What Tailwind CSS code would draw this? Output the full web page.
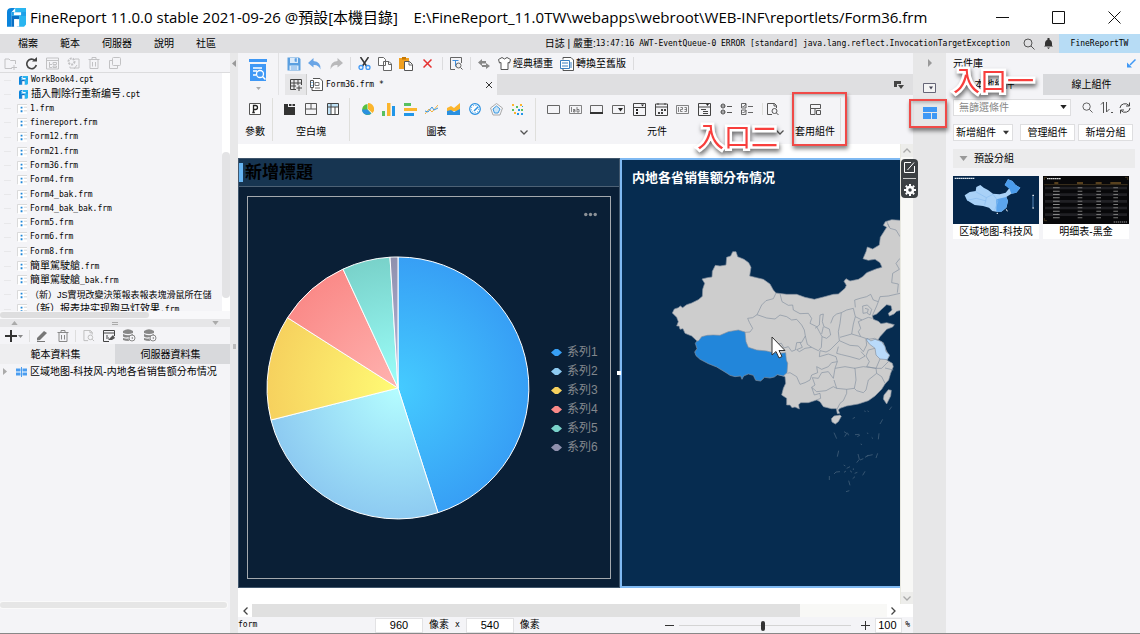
<!DOCTYPE html>
<html lang="zh-Hant">
<head>
<meta charset="utf-8">
<meta name="viewport" content="width=device-width, initial-scale=1">
<title>FineReport 11.0.0</title>
<script src="https://cdn.jsdelivr.net/npm/@tailwindcss/browser@4"></script>
</head>
<body class="relative flex h-screen flex-col overflow-hidden bg-[#f4f4f7] font-['Liberation_Sans','Noto_Sans_CJK_TC',sans-serif] text-[10px] leading-[14px] text-black">

<svg class="hidden" aria-hidden="true">
  <symbol id="logo" viewBox="0 0 58 58"><path d="M14 0H58V50L52 57H37V24H25V0Z" fill="#29b5f0"/><path d="M0 12Q0 0 14 0H25L14 12V57H0Z" fill="#0a84dc"/><path d="M14 24H37V57H30V34H22V57H14Z" fill="#0a6fc4"/><path d="M14 12H58V24H14Z" fill="#1ea0e8"/><path d="M22 34H37V57H22Z" fill="#fff"/><path d="M21 13H43V22H21Z" fill="#fff"/></symbol>
  <symbol id="frm" viewBox="0 0 11 11"><path d="M1 1h10v10H1z" fill="#fff"/><path d="M.5 10V.5H11" fill="none" stroke="#d6d6d6"/><path d="M4 3h2v2H4zM4 7h2v2H4z" fill="#2087d8"/><path d="M7.500 3.500H11M7.500 7.500H11" stroke="#cfcfcf"/></symbol>
  <symbol id="search" viewBox="0 0 12 12"><circle cx="5" cy="5" r="4" fill="none" stroke="#555"/><path d="M8 8l3.500 3.500" stroke="#555"/></symbol>
  <symbol id="down" viewBox="0 0 8 5"><path d="M0 0h8L4 5z" fill="currentColor"/></symbol>
  <symbol id="chev" viewBox="0 0 8 5"><path d="M.5 .5L4 4 7.500 .5" fill="none" stroke="currentColor" stroke-width="1.300"/></symbol>
  <symbol id="trash" viewBox="0 0 12 12"><path d="M.5 2.500h11M4 2V.5h4V2M2 3v8.500h8V3M4.500 5v4.500M7.500 5v4.500" fill="none" stroke="currentColor"/></symbol>
  <symbol id="db" viewBox="0 0 13 13"><path d="M0 2Q5 -1.500 10 2V4Q5 6 0 4ZM0 5Q5 7.500 10 5V6L6 8Q2 9 0 7.500ZM0 9Q3 10 5.500 9.500L6 12Q2 12 0 11Z" fill="#888"/><circle cx="9" cy="9" r="3" fill="#f4f4f7" stroke="#888"/><path d="M8 9l2-1v2z" fill="#888"/></symbol>
  <symbol id="filedoc" viewBox="0 0 12 13"><path d="M5 11.500H.5V.5h7l2 2V5M7 .5V3h2.500" fill="none" stroke="currentColor"/><circle cx="7.500" cy="8" r="2.500" fill="none" stroke="currentColor"/><path d="M9.500 10l2 2" stroke="currentColor"/></symbol>
</svg>

<!-- Title bar -->
<header class="flex h-[34px] shrink-0 items-center bg-white">
  <svg class="ml-[7px] size-[19px]" aria-hidden="true"><use href="#logo"/></svg>
  <h1 class="ml-1 flex-1 whitespace-pre font-['Open_Sans','Noto_Sans_CJK_TC',sans-serif] text-[15px] leading-[20px]">FineReport 11.0.0 stable 2021-09-26 @預設[本機目錄]    E:\FineReport_11.0TW\webapps\webroot\WEB-INF\reportlets/Form36.frm</h1>
  <div class="flex gap-[43px] pr-[19px]">
    <button aria-label="最小化"><svg class="size-[13px]" viewBox="0 0 13 13"><path d="M0 6.500h13" stroke="#111"/></svg></button>
    <button aria-label="最大化"><svg class="size-[13px]" viewBox="0 0 13 13"><path d="M.5 .5h12v12H.5z" fill="none" stroke="#111"/></svg></button>
    <button aria-label="關閉"><svg class="size-[13px]" viewBox="0 0 13 13"><path d="M.5 .5l12 12M12.500 .5l-12 12" stroke="#111"/></svg></button>
  </div>
</header>

<!-- Menu bar -->
<div class="flex h-[19px] shrink-0 items-center bg-[#dfdfe1]">
  <nav class="flex flex-1 gap-[22px] pl-[18px]">
    <button>檔案</button><button>範本</button><button>伺服器</button><button>說明</button><button>社區</button>
  </nav>
  <p class="flex items-center whitespace-pre"><span>日誌 | 嚴重:</span><span class="font-['DejaVu_Sans_Mono',monospace] text-[8px]">13:47:16 AWT-EventQueue-0 ERROR [standard] java.lang.reflect.InvocationTargetException</span></p>
  <button class="ml-[13px]" aria-label="搜尋"><svg class="size-3"><use href="#search"/></svg></button>
  <button class="ml-2 mr-[5px]" aria-label="通知"><svg class="size-[11px]" viewBox="0 0 11 11"><path d="M4.500 0h2v1.500Q9 2.500 9 5v2.500l1 1H1l1-1V5q0-2.500 2.500-3.500zM4 9.500h3L5.500 11z" fill="#333"/></svg></button>
  <button class="h-full w-[81px] bg-[#b7dcf5] font-['DejaVu_Sans_Mono',monospace] text-[8px]">FineReportTW</button>
</div>

<main class="flex min-h-0 flex-1 border-b border-[#888]">

  <!-- Left column -->
  <aside class="flex w-[230px] shrink-0 flex-col">
    <div class="flex h-5 shrink-0 items-center gap-2 border-b border-[#dcdcde] pl-1 pt-px text-[#c2c2c4]">
      <button aria-label="新增資料夾"><svg class="size-[13px]" viewBox="0 0 13 13"><path d="M8 11.500H1V2h4l1.500 1.500h5V7M10 8v5M7.500 10.500H13" fill="none" stroke="currentColor"/></svg></button>
      <button aria-label="重新整理"><svg class="size-[13px]" viewBox="0 0 13 13"><path d="M10 3.500A4.800 4.800 0 1 0 11.300 8" fill="none" stroke="#444" stroke-width="1.600"/><path d="M7 4.500h5V0z" fill="#444"/></svg></button>
      <button aria-label="定位"><svg class="size-[13px]" viewBox="0 0 13 13"><path d="M.5 1h12v11H.5zM.5 3.500h12M3.500 5v5.500H6M3.500 7.500H6M7 5.500h3.500v2H7zM7 9h3.500v1.500H7z" fill="none" stroke="currentColor"/></svg></button>
      <button aria-label="設定"><svg class="size-[13px]" viewBox="0 0 13 13"><circle cx="4.500" cy="4.500" r="3" fill="none" stroke="currentColor" stroke-width="2" stroke-dasharray="2 1"/><path d="M8 2h4v9H3V9.500M7 12l3-4" fill="none" stroke="currentColor"/></svg></button>
      <button aria-label="刪除"><svg class="size-3"><use href="#trash"/></svg></button>
      <button class="pl-px" aria-label="複製"><svg class="size-3" viewBox="0 0 12 12"><rect x="3.500" y=".5" width="8" height="8" rx="1" fill="none" stroke="currentColor"/><path d="M3 3.500H.5v8h8V9" fill="none" stroke="currentColor"/></svg></button>
    </div>

    <div class="relative flex h-[238px] shrink-0 overflow-hidden">
      <ul class="flex h-[243px] flex-1 flex-col justify-between overflow-hidden pl-[4px] whitespace-nowrap *:flex *:h-[14px] *:items-center *:gap-[3px]">
        <li><i class="mr-[5px] w-[7px] border-t border-[#e8e8ea]"></i><svg class="size-[9px]"><use href="#logo"/></svg><span class="font-['DejaVu_Sans_Mono',monospace] text-[8px]">WorkBook4.cpt</span></li>
        <li><i class="mr-[5px] w-[7px] border-t border-[#e8e8ea]"></i><svg class="size-[9px]"><use href="#logo"/></svg><span>插入刪除行重新编号<span class="font-['DejaVu_Sans_Mono',monospace] text-[8px]">.cpt</span></span></li>
        <li><i class="mr-[3px] w-[7px] border-t border-[#e8e8ea]"></i><svg class="size-[10px]"><use href="#frm"/></svg><span class="font-['DejaVu_Sans_Mono',monospace] text-[8px]">1.frm</span></li>
        <li><i class="mr-[3px] w-[7px] border-t border-[#e8e8ea]"></i><svg class="size-[10px]"><use href="#frm"/></svg><span class="font-['DejaVu_Sans_Mono',monospace] text-[8px]">finereport.frm</span></li>
        <li><i class="mr-[3px] w-[7px] border-t border-[#e8e8ea]"></i><svg class="size-[10px]"><use href="#frm"/></svg><span class="font-['DejaVu_Sans_Mono',monospace] text-[8px]">Form12.frm</span></li>
        <li><i class="mr-[3px] w-[7px] border-t border-[#e8e8ea]"></i><svg class="size-[10px]"><use href="#frm"/></svg><span class="font-['DejaVu_Sans_Mono',monospace] text-[8px]">Form21.frm</span></li>
        <li><i class="mr-[3px] w-[7px] border-t border-[#e8e8ea]"></i><svg class="size-[10px]"><use href="#frm"/></svg><span class="font-['DejaVu_Sans_Mono',monospace] text-[8px]">Form36.frm</span></li>
        <li><i class="mr-[3px] w-[7px] border-t border-[#e8e8ea]"></i><svg class="size-[10px]"><use href="#frm"/></svg><span class="font-['DejaVu_Sans_Mono',monospace] text-[8px]">Form4.frm</span></li>
        <li><i class="mr-[3px] w-[7px] border-t border-[#e8e8ea]"></i><svg class="size-[10px]"><use href="#frm"/></svg><span class="font-['DejaVu_Sans_Mono',monospace] text-[8px]">Form4_bak.frm</span></li>
        <li><i class="mr-[3px] w-[7px] border-t border-[#e8e8ea]"></i><svg class="size-[10px]"><use href="#frm"/></svg><span class="font-['DejaVu_Sans_Mono',monospace] text-[8px]">Form4_bak_bak.frm</span></li>
        <li><i class="mr-[3px] w-[7px] border-t border-[#e8e8ea]"></i><svg class="size-[10px]"><use href="#frm"/></svg><span class="font-['DejaVu_Sans_Mono',monospace] text-[8px]">Form5.frm</span></li>
        <li><i class="mr-[3px] w-[7px] border-t border-[#e8e8ea]"></i><svg class="size-[10px]"><use href="#frm"/></svg><span class="font-['DejaVu_Sans_Mono',monospace] text-[8px]">Form6.frm</span></li>
        <li><i class="mr-[3px] w-[7px] border-t border-[#e8e8ea]"></i><svg class="size-[10px]"><use href="#frm"/></svg><span class="font-['DejaVu_Sans_Mono',monospace] text-[8px]">Form8.frm</span></li>
        <li><i class="mr-[3px] w-[7px] border-t border-[#e8e8ea]"></i><svg class="size-[10px]"><use href="#frm"/></svg><span>簡單駕駛艙<span class="font-['DejaVu_Sans_Mono',monospace] text-[8px]">.frm</span></span></li>
        <li><i class="mr-[3px] w-[7px] border-t border-[#e8e8ea]"></i><svg class="size-[10px]"><use href="#frm"/></svg><span>簡單駕駛艙<span class="font-['DejaVu_Sans_Mono',monospace] text-[8px]">_bak.frm</span></span></li>
        <li><i class="mr-[3px] w-[7px] shrink-0 border-t border-[#e8e8ea]"></i><svg class="size-[10px] shrink-0"><use href="#frm"/></svg><span class="text-[9px]">（新）JS實現改變決策報表報表塊滑鼠所在儲</span></li>
        <li><i class="mr-[3px] w-[7px] border-t border-[#e8e8ea]"></i><svg class="size-[10px]"><use href="#frm"/></svg><span>（新）报表块实现跑马灯效果<span class="font-['DejaVu_Sans_Mono',monospace] text-[8px]">.frm</span></span></li>
      </ul>
      <div class="flex w-[8px] shrink-0 flex-col bg-white pt-[79px]"><div class="h-[146px] rounded-full bg-[#e3e3e5]"></div></div>
    </div>
    <div class="h-[8px] shrink-0 bg-[#f8f8fa] pt-px"><div class="h-[6px] w-[149px] rounded-full bg-[#dededf]"></div></div>
    <div class="flex h-[8px] shrink-0 items-center justify-between bg-[#e6e6e8] px-[11px] text-[#aaa]">
      <svg class="h-1 w-[7px] rotate-180"><use href="#down"/></svg>
      <span class="h-[3px] w-[6px] border-y border-[#aaa]"></span>
      <svg class="h-1 w-[7px]"><use href="#down"/></svg>
    </div>
    <div class="flex h-[17px] shrink-0 items-center pl-[5px] text-[#888]">
      <button class="flex items-center" aria-label="新增資料集"><svg class="h-3 w-[18px]" viewBox="0 0 18 12"><path d="M0 6h12M6 0v12" stroke="#333" stroke-width="2"/><path d="M13 5h5l-2.500 3z" fill="#888"/></svg></button>
      <span class="mx-[6px] h-3 border-l border-[#ddd]"></span>
      <button aria-label="編輯"><svg class="size-3" viewBox="0 0 12 12"><path d="M1 8L8 1l3 2-7 7-3 .5z" fill="#777"/><path d="M1 11.500h8" stroke="#777"/></svg></button>
      <button class="ml-[9px]" aria-label="刪除"><svg class="size-3"><use href="#trash"/></svg></button>
      <span class="mx-[6px] h-3 border-l border-[#ddd]"></span>
      <button class="ml-px text-[#bbb]" aria-label="預覽"><svg class="size-3"><use href="#filedoc"/></svg></button>
      <button class="ml-2" aria-label="連線"><svg class="h-3 w-[13px]" viewBox="0 0 13 12"><path d="M6 11.500H.5V.5h11V6M.5 3h11M3 8h3M3 6h2" fill="none" stroke="#444"/><path d="M5 10l5-5 2 3-3 2z" fill="#555"/></svg></button>
      <button class="ml-[7px]" aria-label="資料庫"><svg class="size-[13px]"><use href="#db"/></svg></button>
      <button class="ml-2" aria-label="資料庫權限"><svg class="size-[13px]"><use href="#db"/></svg></button>
    </div>
    <div class="grid h-5 shrink-0 grid-cols-2">
      <button class="bg-[#eeeef0] pr-1 pt-[2px]">範本資料集</button><button class="bg-[#d8d9dc] pr-1 pt-[2px]">伺服器資料集</button>
    </div>
    <div class="flex h-[15px] items-center whitespace-nowrap pl-[3px]">
      <svg class="h-[7px] w-1" viewBox="0 0 4 7"><path d="M0 0l4 3.500L0 7z" fill="#aaa"/></svg>
      <svg class="ml-[9px] mr-[3px] h-[10px] w-[11px]" viewBox="0 0 11 10"><path d="M0 1.500h4.500v7H0zM6.500 1.500H11v7H6.500z" fill="#4a9df0"/><path d="M0 5h11" stroke="#fff"/><path d="M5.500 0v10" stroke="#4a9df0"/></svg>
      <span class="font-['Liberation_Sans','Noto_Sans_CJK_SC',sans-serif]">区域地图-科技风-内地各省销售额分布情况</span>
    </div>
    <div class="mt-auto mb-[25px] h-[6px] w-[227px] rounded-full bg-[#e6e6e6] ring-1 ring-[#fafafa]"></div>
  </aside>

  <div class="flex w-2 shrink-0 flex-col items-center bg-[#e8e8e9] pt-[7px]">
    <svg class="h-[7px] w-1" viewBox="0 0 4 7"><path d="M4 0v7L0 3.500z" fill="#999"/></svg>
    <span class="mt-[277px] h-[5px] w-[3px] bg-[#bbb]"></span>
  </div>

  <!-- Designer -->
  <section class="flex min-w-0 flex-1 flex-col">
    <div class="flex h-[42px] shrink-0">
      <button class="flex w-10 flex-col items-center pt-1" aria-label="預覽">
        <svg class="h-[26px] w-[18px]" viewBox="0 0 18 26"><path d="M0 2h18v3H0zM1 7h16v17H1z" fill="#3f98f5"/><path d="M4 11h9M4 14h4M4 18h3" stroke="#fff" stroke-width="1.500"/><circle cx="11" cy="17" r="3.500" fill="#3f98f5" stroke="#fff" stroke-width="1.300"/><path d="M13.500 19.500l3 3" stroke="#fff" stroke-width="1.500"/></svg>
        <svg class="mt-1 h-[3px] w-[5px] text-[#aaa]"><use href="#down"/></svg>
      </button>
      <div class="flex min-w-0 flex-1 flex-col border-l border-[#e2e2e4] pl-[6px]">
        <div class="flex h-[21px] shrink-0 items-center gap-[7px] whitespace-nowrap pl-[2px]">
          <button aria-label="儲存"><svg class="size-[14px]" viewBox="0 0 14 14"><path d="M.5 .5h11.500l1.500 1.500v11.500H.5z" fill="#5b9fe0"/><path d="M3 1h8v5H3zM2.500 8.500h9V13h-9z" fill="#dcebfa"/><path d="M8 1.500h1.500v3H8zM4 10h6M4 12h6" fill="#3f8edc" stroke="#7ab0e8"/></svg></button>
          <button aria-label="復原"><svg class="size-[14px]" viewBox="0 0 14 14"><path d="M5.500 1L0 6l5.500 4.500V8q5-.5 7 4.500Q13 4.500 5.500 4z" fill="#6aa5e6"/></svg></button>
          <button aria-label="重做"><svg class="size-[14px]" viewBox="0 0 14 14"><path d="M8.500 1L14 6l-5.500 4.500V8q-5-.5-7 4.500Q1 4.500 8.500 4z" fill="#b9b9bb"/></svg></button>
          <span class="h-[13px] border-l border-[#dcdcde]"></span>
          <button aria-label="剪下"><svg class="size-[13px]" viewBox="0 0 13 13"><path d="M2.500 0l6 9M10.500 0l-6 9" stroke="#333" stroke-width="1.500"/><circle cx="3" cy="10.500" r="2" fill="none" stroke="#3f98f5" stroke-width="1.300"/><circle cx="10" cy="10.500" r="2" fill="none" stroke="#3f98f5" stroke-width="1.300"/></svg></button>
          <button aria-label="複製"><svg class="size-[14px]" viewBox="0 0 14 14"><path d="M.5 .5h5l2 2v6h-7zM5.500 4.500h5.500l2.500 2.500v6.500h-8z" fill="#fff" stroke="#666"/><path d="M10.500 5v2.500h3" fill="none" stroke="#666"/></svg></button>
          <button aria-label="貼上"><svg class="size-[14px]" viewBox="0 0 14 14"><path d="M0 1h10v11H0z" fill="#f0a020"/><path d="M3 0h4v2.500H3z" fill="#c87800"/><path d="M5.500 4.500h5l3 3v6h-8z" fill="#fff" stroke="#555"/><path d="M10 5v3h3" fill="none" stroke="#666"/></svg></button>
          <button class="px-[3px]" aria-label="刪除"><svg class="size-[9px]" viewBox="0 0 9 9"><path d="M.5 .5l8 8M8.500 .5l-8 8" stroke="#e53030" stroke-width="1.500"/></svg></button>
          <span class="h-[13px] border-l border-[#dcdcde]"></span>
          <button aria-label="範本預覽"><svg class="size-[13px]" viewBox="0 0 13 13"><path d="M5 12.500H.5V.5h11V6" fill="none" stroke="#666"/><path d="M2.500 3.500h6M5.500 3.500v6" stroke="#3f8edc"/><circle cx="8.500" cy="8.500" r="2.500" fill="#eee" stroke="#666"/><path d="M10.500 10.500l2 2" stroke="#555"/></svg></button>
          <span class="h-[13px] border-l border-[#dcdcde]"></span>
          <button aria-label="取代"><svg class="h-[10px] w-[12px]" viewBox="0 0 12 10"><path d="M4 0v2h4v2.500H4V7L0 3.500zM8 4l4 3-4 3V8H4V6h4z" fill="#888"/></svg></button>
          <button class="flex items-center gap-[2px] pl-px"><svg class="size-[13px]" viewBox="0 0 13 13"><path d="M4 .5q2.500 3 5 0l3.500 2-1 3.500L10 5.500v7H3v-7L1.500 6l-1-3.500z" fill="#fff" stroke="#555"/></svg>經典穩重</button>
          <button class="flex items-center gap-[2px]"><svg class="size-[14px]" viewBox="0 0 14 14"><path d="M3 2.500v-2h8l2.500 2.500v10.500H3V12" fill="#fff" stroke="#555"/><path d="M.5 3.500h9v8h-9z" fill="#fff" stroke="#3a7fc0"/><path d="M2 6h6M2 9h6M11 5v6" stroke="#3a7fc0"/></svg>轉換至舊版</button>
          <span class="h-[13px] border-l border-[#dcdcde]"></span>
        </div>
        <div class="flex h-[21px] items-center bg-[#dfdfe1]">
          <button class="grid h-full w-[22px] place-items-center border-r border-[#ccc] bg-[#e6e6e8]" aria-label="新增範本"><svg class="size-[12px]" viewBox="0 0 12 12"><path d="M.5 6V.5h11V6M.5 4h11M4 .5v10M8 .5V6M.5 7H6M.5 4v6.500H6M9 6.500V12M6.500 9H12" fill="none" stroke="#444"/></svg></button>
          <div class="flex h-full w-[190px] items-center bg-[#f4f4f7] pl-[3px] pr-[5px]">
            <svg class="size-[13px]" viewBox="0 0 13 13"><path d="M3 .5h7l2.500 2.500v9.500H2V10" fill="#fff" stroke="#555"/><path d="M.5 2.500h3v7h-3z" fill="#fff" stroke="#555"/><path d="M1.500 4.500h1M1.500 7.500h1" stroke="#2087d8"/><path d="M5 4.500h4v3H5zM5 10h5" fill="none" stroke="#777"/></svg>
            <span class="ml-[3px] flex-1 whitespace-pre font-['DejaVu_Sans_Mono',monospace] text-[8px]">Form36.frm *</span>
            <button aria-label="關閉分頁"><svg class="size-[6px]" viewBox="0 0 6 6"><path d="M0 0l6 6M6 0L0 6" stroke="#333"/></svg></button>
          </div>
          <button class="ml-auto mr-[9px]" aria-label="範本清單"><svg class="h-[8px] w-[10px]" viewBox="0 0 10 8"><path d="M0 0h7v3H3v3H0zM4 4h6L7 8z" fill="#444"/></svg></button>
        </div>
      </div>
    </div>

    <!-- Component ribbon -->
    <div class="flex h-[49px] shrink-0 *:my-[3px] *:flex *:flex-col *:items-center *:gap-[9px] *:pt-1">
      <div class="w-[35px] border-r border-[#dfdfdc]">
        <div class="flex h-[14px] items-center"><button aria-label="參數"><svg class="size-3" viewBox="0 0 12 12"><path d="M.5 .5h11v11H.5z" fill="#fff" stroke="#555"/><path d="M4.500 9.500v-7h2q2 0 2 2t-2 2h-2M3.300 9.500h2.500" fill="none" stroke="#222" stroke-width="1.300"/></svg></button></div>
        <span>參數</span>
      </div>
      <div class="w-[77px] border-r border-[#dfdfdc]">
        <div class="flex h-[14px] items-center gap-[10px]">
          <button aria-label="tab塊"><svg class="size-[11px]" viewBox="0 0 11 11"><path d="M0 0h4v3h7v8H0z" fill="#333"/><path d="M5 0h2.500v2H5zM8.500 0H11v2H8.500z" fill="#333"/></svg></button>
          <button aria-label="絕對畫布塊"><svg class="size-3" viewBox="0 0 12 12"><path d="M.5 .5h11v11H.5zM.5 6h11M6 .5V6" fill="none" stroke="#555"/></svg></button>
          <button aria-label="報表塊"><svg class="size-3" viewBox="0 0 12 12"><path d="M.5 .5h11v11H.5z" fill="#fff" stroke="#444"/><path d="M1 1h3v10H1zM4 1h7v3H4z" fill="#bfe2f7"/><path d="M4 .5v11M.5 4h11M8 4v7" stroke="#444"/></svg></button>
        </div>
        <span>空白塊</span>
      </div>
      <div class="w-[186px] border-r border-[#dfdfdc]">
        <div class="grid h-[14px] w-[172px] grid-cols-8 place-items-center">
          <button aria-label="圓形圖"><svg class="size-[13px]" viewBox="0 0 13 13"><path d="M6.500 6.500V1a5.500 5.500 0 1 0 4 9.500z" fill="#58c040"/><path d="M6.500 6.500h-5.500a5.500 5.500 0 0 0 9 4z" fill="#2a90e0"/><path d="M7 6V0a6 6 0 0 1 4.500 10z" fill="#fbb52d"/></svg></button>
          <button aria-label="直條圖"><svg class="size-[13px]" viewBox="0 0 13 13"><path d="M0 8h3v5H0z" fill="#58c060"/><path d="M5 0h3.500v13H5z" fill="#fbb52d"/><path d="M10 3h3v10h-3z" fill="#2196e8"/></svg></button>
          <button aria-label="橫條圖"><svg class="size-[13px]" viewBox="0 0 13 13"><path d="M0 0h7v3H0z" fill="#58c060"/><path d="M0 5h13v3H0z" fill="#fbb52d"/><path d="M0 10h10v3H0z" fill="#2196e8"/></svg></button>
          <button aria-label="折線圖"><svg class="size-[13px]" viewBox="0 0 13 13"><path d="M0 11l4-5 3 3 6-7" fill="none" stroke="#f0b040"/><path d="M0 8l3 1 4-5 2 3 4-2" fill="none" stroke="#3a98e0"/></svg></button>
          <button aria-label="區域圖"><svg class="size-[13px]" viewBox="0 0 13 13"><path d="M0 5l4-2 3 2 6-5v8H0z" fill="#fbb52d"/><path d="M0 8l4-1 3 2 6-3v6H0z" fill="#2a90e0"/></svg></button>
          <button aria-label="儀表板"><svg class="size-[12px]" viewBox="0 0 12 12"><circle cx="6" cy="6" r="5.300" fill="#fff" stroke="#2a90e0" stroke-width="1.200"/><circle cx="6" cy="6" r="3.700" fill="none" stroke="#2a90e0" stroke-dasharray="1 1.500"/><path d="M5 8l4-4" stroke="#2a90e0" stroke-width="1.500"/></svg></button>
          <button aria-label="雷達圖"><svg class="size-[13px]" viewBox="0 0 13 13"><path d="M6.500 .5l6 4.500-2.500 7H3L.5 5z" fill="none" stroke="#aaa"/><path d="M6.500 3l3.500 3-2 4H4.500L3 6z" fill="#cbe5f8" stroke="#3a98e0"/></svg></button>
          <button aria-label="散佈圖"><svg class="size-[13px]" viewBox="0 0 13 13"><path d="M1 1h2v2H1zM9 1h2v2H9zM3 9h2v2H3z" fill="#fbb52d"/><path d="M5 3h2v2H5zM10 6h2v2h-2zM1 6h2v2H1z" fill="#58c060"/><path d="M7 6h2v2H7zM10 10h2v2h-2zM6 10h2v2H6zM11 3h1v1h-1z" fill="#2196e8"/></svg></button>
        </div>
        <div class="grid w-full grid-cols-[1fr_auto_1fr] items-center px-[7px]"><span></span><span class="pr-3">圖表</span><button class="justify-self-end" aria-label="更多圖表"><svg class="h-[5px] w-2 text-[#555]"><use href="#chev"/></svg></button></div>
      </div>
      <div class="w-[250px]">
        <div class="flex h-[14px] items-center">
          <div class="grid w-[215px] grid-cols-10 place-items-center">
            <button aria-label="文字框"><svg class="h-[9px] w-[13px]" viewBox="0 0 13 9"><path d="M.5 .5h12v8H.5z" fill="none" stroke="#666"/></svg></button>
            <button aria-label="標籤"><svg class="h-[9px] w-[13px]" viewBox="0 0 13 9"><path d="M.5 .5h12v8H.5zM2.500 2v5M4 4.500h2V7H4.500V5.500H6M8 2v5M8 4.500h2V7H8" fill="none" stroke="#666" stroke-width=".8"/></svg></button>
            <button aria-label="按鈕"><svg class="h-[9px] w-[13px]" viewBox="0 0 13 9"><path d="M.5 .5h12v7H.5z" fill="none" stroke="#666"/><path d="M0 8h13" stroke="#333" stroke-width="2"/></svg></button>
            <button aria-label="下拉框"><svg class="h-[9px] w-[13px]" viewBox="0 0 13 9"><path d="M.5 .5h12v8H.5z" fill="none" stroke="#666"/><path d="M6 3h5L8.500 6.500z" fill="#222"/></svg></button>
            <button aria-label="下拉核取框"><svg class="size-[13px]" viewBox="0 0 13 13"><path d="M.5 .5h12v12H.5zM.5 4.500h12" fill="none" stroke="#444"/><path d="M8 1.500h3L9.500 3.500zM3 6h2v2H3zM3 9h2v2H3z" fill="#222"/></svg></button>
            <button aria-label="日期"><svg class="size-[13px]" viewBox="0 0 13 13"><path d="M.5 1h12v11.500H.5zM.5 4h12M3 0v2M10 0v2" fill="none" stroke="#444"/><path d="M6 6h2v2H6zM9 6h2v2H9zM3 9h2v2H3zM6 9h2v2H6z" fill="#444"/></svg></button>
            <button aria-label="數字"><svg class="h-[9px] w-[13px]" viewBox="0 0 13 9"><path d="M.5 .5h12v8H.5zM2.500 2v5M4.500 2.500h2v2h-2v2h2M8.500 2.500h2v4h-2M8.500 4.500h2" fill="none" stroke="#666" stroke-width=".8"/></svg></button>
            <button aria-label="下拉樹"><svg class="size-[13px]" viewBox="0 0 13 13"><path d="M.5 .5h12v12H.5zM.5 4h12M3 6.500h5M5 8.500h5M5 10.500h5" fill="none" stroke="#444"/><path d="M8 1h3L9.500 3z" fill="#222"/></svg></button>
            <button aria-label="單選鈕組"><svg class="size-[12px]" viewBox="0 0 12 12"><circle cx="3" cy="3" r="2" fill="none" stroke="#444"/><circle cx="3" cy="9" r="2" fill="none" stroke="#444"/><path d="M1 3h4M1 9h4M7 3.500h5M7 9.500h5" stroke="#555"/></svg></button>
            <button aria-label="核取方塊組"><svg class="size-[12px]" viewBox="0 0 12 12"><path d="M.5 .5h4.500v4.500H.5zM.5 7h4.500v4.500H.5zM1.500 3l1 1L5 1M1.500 9l1 1L5 7.500M7 3.500h5M7 9.500h5" fill="none" stroke="#555" stroke-width=".9"/></svg></button>
          </div>
          <span class="mx-[4px] h-3 border-l border-[#dfdfdc]"></span>
          <button class="text-[#555]" aria-label="查詢"><svg class="h-[13px] w-3"><use href="#filedoc"/></svg></button>
        </div>
        <div class="grid w-full grid-cols-[1fr_auto_1fr] items-center px-[2px]"><span></span><span class="pr-2">元件</span><button class="justify-self-end" aria-label="更多元件"><svg class="h-[5px] w-2 text-[#555]"><use href="#chev"/></svg></button></div>
      </div>
      <div class="w-[55px] border-r border-[#dfdfdc] pl-[4px]">
        <div class="flex h-[14px] items-center"><svg class="size-[11px]" viewBox="0 0 11 11"><path d="M.5 .5h10v4H.5zM.5 4.500v6h4.500v-6M6.500 6.500h4v4h-4z" fill="none" stroke="#555"/></svg></div>
        <button>套用組件</button>
      </div>
    </div>

    <!-- Form canvas -->
    <div class="flex min-h-0 flex-1">
      <div class="flex min-w-0 flex-1 flex-col bg-white pb-4 pt-[14px]">
        <div class="flex min-h-0 flex-1">
          <div class="flex w-[382px] shrink-0 flex-col border border-[#40566c] bg-[#0a1f36]">
            <div class="flex h-[28px] shrink-0 items-center border-b border-[#4d6175] bg-[#173551]">
              <span class="h-[19px] w-1 bg-[#66b4f0]"></span>
              <h2 class="ml-[2px] text-[17px] font-bold leading-[24px] text-black">新增標題</h2>
            </div>
            <div class="m-[8px] mt-[9px] flex min-h-0 flex-1 items-center border border-[#a4a9ae]">
              <svg class="ml-[18px] size-[264px] shrink-0" viewBox="-132 -132 264 264" aria-label="圓形圖" stroke="#fff" stroke-width="1" role="img">
                <defs>
                  <radialGradient id="g1" gradientUnits="userSpaceOnUse" cx="0" cy="0" r="131"><stop stop-color="#45cbff"/><stop offset="1" stop-color="#379ff5"/></radialGradient>
                  <radialGradient id="g2" gradientUnits="userSpaceOnUse" cx="0" cy="0" r="131"><stop stop-color="#b4fdff"/><stop offset="1" stop-color="#8dcaf1"/></radialGradient>
                  <radialGradient id="g3" gradientUnits="userSpaceOnUse" cx="0" cy="0" r="131"><stop stop-color="#fffb75"/><stop offset="1" stop-color="#f6d15e"/></radialGradient>
                  <radialGradient id="g4" gradientUnits="userSpaceOnUse" cx="0" cy="0" r="131"><stop stop-color="#ffb3b0"/><stop offset="1" stop-color="#fa8a88"/></radialGradient>
                  <radialGradient id="g5" gradientUnits="userSpaceOnUse" cx="0" cy="0" r="131"><stop stop-color="#9cfffa"/><stop offset="1" stop-color="#79d2ca"/></radialGradient>
                  <radialGradient id="g6" gradientUnits="userSpaceOnUse" cx="0" cy="0" r="131"><stop stop-color="#b6b6dc"/><stop offset="1" stop-color="#8f90ad"/></radialGradient>
                </defs>
                <path d="M0 0V-131A131 131 0 0 1 40 124.700Z" fill="url(#g1)"/>
                <path d="M0 0L40 124.700A131 131 0 0 1 -127 32Z" fill="url(#g2)"/>
                <path d="M0 0L-127 32A131 131 0 0 1 -110.500 -70.300Z" fill="url(#g3)"/>
                <path d="M0 0L-110.500 -70.300A131 131 0 0 1 -55 -118.900Z" fill="url(#g4)"/>
                <path d="M0 0L-55 -118.900A131 131 0 0 1 -8 -130.800Z" fill="url(#g5)"/>
                <path d="M0 0L-8 -130.800A131 131 0 0 1 0 -131Z" fill="url(#g6)"/>
              </svg>
              <div class="flex min-w-0 flex-1 flex-col self-stretch pt-[15px]">
                <button class="mr-[13px] self-end" aria-label="更多"><svg class="h-[5px] w-[13px]" viewBox="0 0 13 5"><g fill="#8c9197"><circle cx="1.800" cy="2.500" r="1.700"/><circle cx="6.500" cy="2.500" r="1.700"/><circle cx="11.200" cy="2.500" r="1.700"/></g></svg></button>
                <ul class="mt-[126px] pl-[21px] text-[12px] leading-[19px] text-[#82878d] *:flex *:items-center *:gap-[5px]">
                  <li><svg class="h-[7px] w-[11px]" viewBox="0 0 11 7"><path d="M0 3.500L4 0h3l4 3.500L7 7H4z" fill="#379ff5"/></svg>系列1</li>
                  <li><svg class="h-[7px] w-[11px]" viewBox="0 0 11 7"><path d="M0 3.500L4 0h3l4 3.500L7 7H4z" fill="#8dcaf1"/></svg>系列2</li>
                  <li><svg class="h-[7px] w-[11px]" viewBox="0 0 11 7"><path d="M0 3.500L4 0h3l4 3.500L7 7H4z" fill="#f6d15e"/></svg>系列3</li>
                  <li><svg class="h-[7px] w-[11px]" viewBox="0 0 11 7"><path d="M0 3.500L4 0h3l4 3.500L7 7H4z" fill="#fa8a88"/></svg>系列4</li>
                  <li><svg class="h-[7px] w-[11px]" viewBox="0 0 11 7"><path d="M0 3.500L4 0h3l4 3.500L7 7H4z" fill="#79d2ca"/></svg>系列5</li>
                  <li><svg class="h-[7px] w-[11px]" viewBox="0 0 11 7"><path d="M0 3.500L4 0h3l4 3.500L7 7H4z" fill="#8f90ad"/></svg>系列6</li>
                </ul>
              </div>
            </div>
          </div>
          <div class="relative min-w-0 flex-1 border-2 border-r-0 border-[#7fb9f2] bg-[#062c50]">
            <span class="absolute -left-[5px] top-[211px] size-1 bg-white"></span>
            <h2 class="absolute left-[10px] top-[7px] font-['Noto_Sans_CJK_SC',sans-serif] text-[13px] font-bold leading-[20px] text-white">内地各省销售额分布情况</h2>
            <svg class="h-full w-full" viewBox="6 30 834 1278" preserveAspectRatio="xMinYMin slice" role="img" aria-label="中國地圖">
              <g stroke="#8591a0" stroke-width="2" stroke-linejoin="round">
                <path fill="#cdcdcd" d="M157 489L163 477 175 473 181 468 188 473 200 464 215 459 235 449 247 439 248 418 254 400 246 387 262 383 276 381 277 364 286 346 300 348 318 345 320 322 332 318 338 305 348 305 353 320 372 328 386 338 393 352 389 378 410 383 430 388 450 402 460 420 468 429 500 433 530 433 555 442 583 448 610 441 640 433 655 432 675 415 679 406 672 394 678 386 690 393 715 388 728 380 740 368 770 356 786 352 780 338 765 328 745 331 729 326 738 305 742 291 758 297 778 285 781 262 800 232 790 226 796 215 815 209 840 211 846 210V480L830 484 822 492 808 498 805 490 816 480 813 467 800 464 785 478 770 492 757 497 760 508 775 514 783 521 800 518 823 524 818 531 800 538 790 549 780 560 774 570 790 578 798 600 808 618 800 630 817 640 820 650 812 670 806 690 795 702 785 718 765 738 745 752 715 762 680 768 660 775 655 780 659 790 652 791 649 776 634 776 610 770 600 755 590 750 565 758 542 758 536 764 538 777 525 771 516 773 510 765 500 765 500 745 485 735 490 715 497 700 495 680 300 620 230 572 215 558 195 550 189 536 180 538 177 528 170 528 175 515 170 502Z"/>
                <path fill="#2286da" d="M230 574L236 572 245 560 262 556 280 555 300 556 325 545 355 540 375 546 378 575 385 592 410 600 440 603 455 607 482 610 497 608 499 630 503 640 501 668 490 678 472 674 463 681 450 684 434 682 422 693 407 691 400 676 385 672 371 678 366 688 362 678 345 680 330 676 318 668 290 651 265 641 240 628 228 617 224 606 231 596 226 580Z"/>
                <path fill="#b9dafa" d="M738 568L744 565 752 573 765 568 785 575 795 590 798 605 809 615 802 629 780 627 768 615 765 595 748 582Z"/>
                <path fill="#cdcdcd" d="M634 806L642 798 660 795 664 799 655 815 646 822 636 816ZM790 747L792 735 805 719 814 721 812 738 800 762Z"/>
                <g fill="none">
                  <path d="M468 429L460 446 438 452 425 465 417 482 411 494 398 503 383 505 388 517 398 535 390 546 375 547"/>
                  <path d="M411 494L440 504 465 507 480 495 500 500 515 510 530 508 545 525 553 540 556 558 545 577 530 578 526 600 515 604 505 590 492 594 484 580 471 582"/>
                  <path d="M480 431L486 455 505 466 518 465 520 480 540 491 565 490 575 505 570 520 590 530 598 545 606 560 604 592 595 602 575 592 562 583 556 558"/>
                  <path d="M540 577L547 592 530 599 538 605 555 595 575 592M598 525L600 495 610 492 607 515 612 530 628 537 632 555 620 565 606 560 M598 525L585 535M610 530L605 552"/>
                  <path d="M632 520L640 500 650 492 664 488 660 520 655 545 658 572 645 585 630 600 618 606 600 602M664 488L680 480 700 475 706 500 700 522 695 552 660 562M706 472L704 450 720 445 740 440 752 433 760 450 775 455 780 440 805 438 840 430"/>
                  <path d="M775 455L770 468 757 497M728 468L742 465 755 478 750 495 740 488 729 490ZM735 475L745 478 742 488M706 500L726 510 715 515 722 535 715 545 722 560 745 568 764 565 774 570M726 510L745 502 757 505"/>
                  <path d="M695 552L722 560M658 572L690 586 715 588 730 605 740 585 738 568M655 590L650 610 665 614 690 620 718 628 735 618 723 605 M600 602L598 620 625 612 648 620 652 635 635 638 625 650 605 658 590 650 593 668 575 675 570 690 555 698 540 703 530 680 510 668 502 670"/>
                  <path d="M652 635L645 655 640 685 625 665 605 668 595 685 577 683 585 705 575 712 590 725 618 722 640 710 650 715 642 690M645 655L675 650 705 655 708 690 703 715 680 718 650 715 M703 655L730 650 748 652 768 655 770 670 745 690 738 720 730 728 710 722 703 715"/>
                  <path d="M575 712L583 735 600 730 602 745 590 750M650 780L660 760 670 752 680 730 680 718M768 655L785 655 805 635M765 595L745 600 738 618 748 635 740 650 768 655 780 627M770 670L785 680 795 700M820 660L795 654"/>
                  <path d="M840 325L828 340 838 358 818 370 815 398 835 402 832 428M800 214L810 235 828 240 840 260M808 232L803 222"/>
                </g>
              </g>
              <g fill="none" stroke="#4f6a82" stroke-width="2">
                <path d="M815 770L808 780M788 808L780 822M705 802L698 806M734 782L736 786M743 782L746 786M642 848L650 866M672 845L680 850 674 860M682 848L686 856M705 854L718 853M712 860L720 855M742 848L744 852M755 862L759 866M777 850L775 868M722 882L726 884M656 902L652 920M773 910L768 924M740 918L758 914M714 912L718 928 710 938M720 930L730 926M735 922L745 916M671 945L676 948M642 972L648 966 660 965M672 967L678 963M690 962L696 967M704 970L712 967M735 964L728 976M705 980L698 986M686 992L690 1006M628 978V990M678 1025L688 1022M690 950L680 955M700 955V960"/>
              </g>
            </svg>
          </div>
        </div>
      </div>
      <div class="flex w-[13px] shrink-0 flex-col items-center justify-between border-l border-[#e8e8e0] bg-[#f8f8f6] text-[#aaa]">
        <span class="grid h-[13px] w-full place-items-center bg-[#ededeb]"><svg class="h-[5px] w-2 rotate-180"><use href="#chev"/></svg></span>
        <span class="grid h-[12px] w-full place-items-center bg-[#ededeb]"><svg class="h-[5px] w-2"><use href="#chev"/></svg></span>
      </div>
    </div>
    <div class="flex h-[13px] shrink-0 items-center bg-[#f8f8f6] text-[#444]">
      <span class="grid h-full w-[14px] place-items-center bg-white"><svg class="h-2 w-[5px]" viewBox="0 0 5 8"><path d="M4.500 .5L1 4l3.500 3.500" fill="none" stroke="currentColor" stroke-width="1.300"/></svg></span>
      <span class="h-full w-[548px] bg-[#e0e0e0]"></span>
      <span class="ml-auto flex h-full w-[26px] items-center bg-white pl-1"><svg class="h-2 w-[5px]" viewBox="0 0 5 8"><path d="M.5 .5L4 4 .5 7.500" fill="none" stroke="currentColor" stroke-width="1.300"/></svg></span>
    </div>
    <div class="flex h-[16px] shrink-0 items-center whitespace-nowrap">
      <span class="w-[137px] font-['DejaVu_Sans_Mono',monospace] text-[8px]">form</span>
      <input aria-label="寬度" value="960" class="h-[15px] w-[48px] border border-[#e2e2e4] bg-white text-center text-[11px] leading-[13px]">
      <span class="ml-[6px]">像素</span><span class="mx-[6px] font-['DejaVu_Sans_Mono',monospace] text-[8px]">x</span>
      <input aria-label="高度" value="540" class="h-[15px] w-[48px] border border-[#e2e2e4] bg-white text-center text-[11px] leading-[13px]">
      <span class="ml-[6px]">像素</span>
      <div class="ml-auto flex items-center">
        <button aria-label="縮小"><svg class="size-[9px]" viewBox="0 0 9 9"><path d="M0 4.500h9" stroke="#333"/></svg></button>
        <input type="range" aria-label="縮放" value="49" class="mx-[5px] h-3 w-[172px] appearance-none bg-transparent [&::-webkit-slider-runnable-track]:h-px [&::-webkit-slider-runnable-track]:bg-[#d4d4d4] [&::-webkit-slider-thumb]:-mt-[4px] [&::-webkit-slider-thumb]:h-[10px] [&::-webkit-slider-thumb]:w-1 [&::-webkit-slider-thumb]:appearance-none [&::-webkit-slider-thumb]:rounded-sm [&::-webkit-slider-thumb]:bg-[#333]">
        <button class="ml-[5px]" aria-label="放大"><svg class="size-[9px]" viewBox="0 0 9 9"><path d="M0 4.500h9M4.500 0v9" stroke="#333"/></svg></button>
        <input aria-label="縮放比例" value="100" class="ml-[5px] h-[15px] w-[27px] border border-[#e2e2e4] bg-white px-[2px] text-[11px] leading-[13px]">
        <span class="ml-[3px] mr-[3px] font-['DejaVu_Sans_Mono',monospace] text-[8px]">%</span>
      </div>
    </div>
  </section>

  <!-- Panel switcher -->
  <div class="flex w-[33px] shrink-0 flex-col items-center bg-[#e7e7e8] pt-[6px]">
    <svg class="h-[8px] w-1" viewBox="0 0 4 8"><path d="M0 0l4 4-4 4z" fill="#999"/></svg>
    <button class="mt-[16px]" aria-label="元件設定"><svg class="h-[10px] w-[13px]" viewBox="0 0 13 10"><path d="M.5 .5h12v9H.5z" fill="#f4f4f4" stroke="#667"/><path d="M6 3.500h4L8 6.500z" fill="#445"/></svg></button>
    <button class="mt-[14px]" aria-label="元件庫"><svg class="h-[12px] w-[14px]" viewBox="0 0 14 12"><path d="M0 0h14v5H0zM0 6h8v6H0zM9 6h5v6H9z" fill="#3f98f5"/></svg></button>
  </div>

  <!-- Component library -->
  <aside class="flex w-[194px] shrink-0 flex-col bg-[#f4f4f7]">
    <div class="flex h-[21px] shrink-0 items-center justify-between pl-[7px] pr-1"><span>元件庫</span><button aria-label="收合"><svg class="size-[9px]" viewBox="0 0 9 9"><path d="M8.500 .5L3 6" stroke="#3f98f5" stroke-width="1.500"/><path d="M0 3.500v5h5z" fill="#3f98f5"/></svg></button></div>
    <div class="grid h-[21px] shrink-0 grid-cols-2"><button class="pt-px">本地組件</button><button class="bg-[#d8d9dc] pt-px">線上組件</button></div>
    <div class="flex flex-col gap-[8px] px-[7px] pt-1">
      <div class="flex h-[17px] items-center">
        <div class="relative h-full w-[118px]">
          <select aria-label="篩選條件" class="h-full w-full appearance-none border border-[#dedee0] bg-white pl-[5px] text-[10px] leading-[14px] text-[#888]"><option>無篩選條件</option></select>
          <svg class="pointer-events-none absolute right-[4px] top-[6px] h-[4px] w-[7px] text-[#222]"><use href="#down"/></svg>
        </div>
        <button class="ml-[11px]" aria-label="搜尋"><svg class="size-[11px]" viewBox="0 0 12 12"><use href="#search"/></svg></button>
        <button class="ml-[7px]" aria-label="排序"><svg class="size-[13px]" viewBox="0 0 13 13"><path d="M1 3.500L3.500 1v11M6.500 1v10l3-3M11 11.500h2" fill="none" stroke="#555"/></svg></button>
        <button class="ml-[6px]" aria-label="重新整理"><svg class="size-[12px]" viewBox="0 0 12 12"><path d="M1 6A5 4.500 0 0 1 10 3.500M11 6A5 4.500 0 0 1 2 8.500M10.500 .5v3.500H7M1.500 11.500V8H5" fill="none" stroke="#444"/></svg></button>
      </div>
      <div class="flex h-[17px] whitespace-nowrap *:border *:border-[#dedee0] *:bg-white">
        <button class="flex w-[60px] items-center gap-[7px] pl-[2px]">新增組件<svg class="h-[5px] w-[6px] text-[#333]"><use href="#down"/></svg></button>
        <button class="ml-auto w-[55px]">管理組件</button>
        <button class="ml-[3px] w-[55px]">新增分組</button>
      </div>
    </div>
    <div class="ml-[7px] mr-[5px] mt-[8px] flex h-[19px] items-center gap-[6px] bg-[#ebebec] pl-[6px]"><svg class="h-[5px] w-[9px] text-[#999]"><use href="#down"/></svg>預設分組</div>
    <div class="mt-[8px] flex gap-1 pl-[7px] text-center font-['Liberation_Sans','Noto_Sans_CJK_SC',sans-serif]">
      <figure class="w-[86px] bg-white">
        <svg class="h-12 w-[86px]" viewBox="280 525 258 144"><path d="M280 525h258v144H280z" fill="#05264a"/><path d="M285 532h60" stroke="#dfe8f0" stroke-width="4" stroke-dasharray="5 1"/><path d="M315 583L330 573 348 570 350 558 362 552 372 560 385 567 400 578 420 580 438 575 450 560 435 552 445 535 458 540 468 552 482 560 470 575 455 578 440 588 445 600 440 620 425 632 410 632 398 630 388 620 370 615 345 612 322 598Z" fill="#a9d1f7"/><path d="M435 552L445 535 458 540 468 552 482 560 470 575 455 578 450 565Z" fill="#4b9cec"/><path d="M410 595L440 588 445 600 440 620 425 632 410 632Z" fill="#5ba4ec"/><path d="M348 572L380 590 400 580M380 590L375 612M400 580L415 600 405 628M322 598L350 592 380 600" fill="none" stroke="#8abcf0" stroke-width="2"/><path d="M520 585v35" stroke="#7fb9f2" stroke-width="2"/><path d="M518 583h5M518 621h5M411 637h4M440 625l3 6" stroke="#fff" stroke-width="3"/></svg>
        <figcaption class="whitespace-nowrap leading-[15px]">区域地图-科技风</figcaption>
      </figure>
      <figure class="w-[86px] bg-white">
        <svg class="h-12 w-[86px]" viewBox="0 0 258 144"><path d="M0 0h258v144H0z" fill="#08080a"/><path d="M6 32h246v8H6zM6 52h246v8H6zM6 72h246v8H6zM6 92h246v8H6zM6 112h246v8H6z" fill="#202024"/><path d="M12 8h42" stroke="#ddd" stroke-width="4" stroke-dasharray="5 1"/><path d="M4 12V4h8M246 4h8v8M4 126v8h8M4 26h250" fill="none" stroke="#5d4a2a" stroke-width="2"/><path d="M34 21h12M102 21h18M158 21h18M202 21h32" stroke="#a87a32" stroke-width="3"/><path d="M40 34v96" stroke="#888" stroke-width="20" stroke-dasharray="3 7"/><path d="M111 34v96M167 34v96M218 34v96" stroke="#777" stroke-width="14" stroke-dasharray="3 7"/><path d="M212 138h40" stroke="#999" stroke-width="3" stroke-dasharray="4 2"/></svg>
        <figcaption class="leading-[15px]">明细表-黑金</figcaption>
      </figure>
    </div>
  </aside>
</main>

<!-- Floating tools over the canvas -->
<div class="absolute left-[901px] top-[159px] flex h-[39px] w-[17px] flex-col items-center justify-around rounded-sm bg-[#3c4043]">
  <button aria-label="編輯"><svg class="size-[11px]" viewBox="0 0 11 11"><path d="M7 .5H.5v10h10V4M3.500 8L10 .5" fill="none" stroke="#fff"/></svg></button>
  <span class="w-[13px] border-t border-[#ccc]"></span>
  <button aria-label="設定"><svg class="size-[12px]" viewBox="0 0 12 12"><circle cx="6" cy="6" r="3" fill="none" stroke="#fff" stroke-width="2.500"/><path d="M6 0v2M6 10v2M0 6h2M10 6h2M1.800 1.800l1.400 1.400M8.800 8.800l1.400 1.400M10.200 1.800L8.800 3.200M3.200 8.800l-1.400 1.400" stroke="#fff" stroke-width="2"/></svg></button>
</div>
<svg class="absolute left-[771px] top-[336px] h-[23px] w-[16px]" viewBox="0 0 16 23" aria-hidden="true"><path d="M1 1v18l4-3.500 3 6.500 3-1.500-3-6h6z" fill="#fff" stroke="#333"/></svg>

<!-- Annotations -->
<div class="pointer-events-none absolute left-[792px] top-[92px] h-[54px] w-[55px] border-2 border-[#f04a48] shadow-[1px_3px_4px_#0007,inset_1px_2px_3px_#0003]"></div>
<div class="pointer-events-none absolute left-[909px] top-[99px] h-[29px] w-[38px] border-2 border-[#f04a48] shadow-[1px_3px_4px_#0007,inset_1px_2px_3px_#0003]"></div>
<p class="pointer-events-none absolute left-[697px] top-[120px] font-['Noto_Sans_CJK_SC',sans-serif] text-[27px] leading-[32px] text-[#f83e3c] [-webkit-text-stroke:5px_white] [paint-order:stroke_fill] drop-shadow-[1px_3px_2px_#0008]">入口二</p>
<p class="pointer-events-none absolute left-[953px] top-[64px] font-['Noto_Sans_CJK_SC',sans-serif] text-[27px] leading-[32px] text-[#f83e3c] [-webkit-text-stroke:5px_white] [paint-order:stroke_fill] drop-shadow-[1px_3px_2px_#0008]">入口一</p>
</body>
</html>
